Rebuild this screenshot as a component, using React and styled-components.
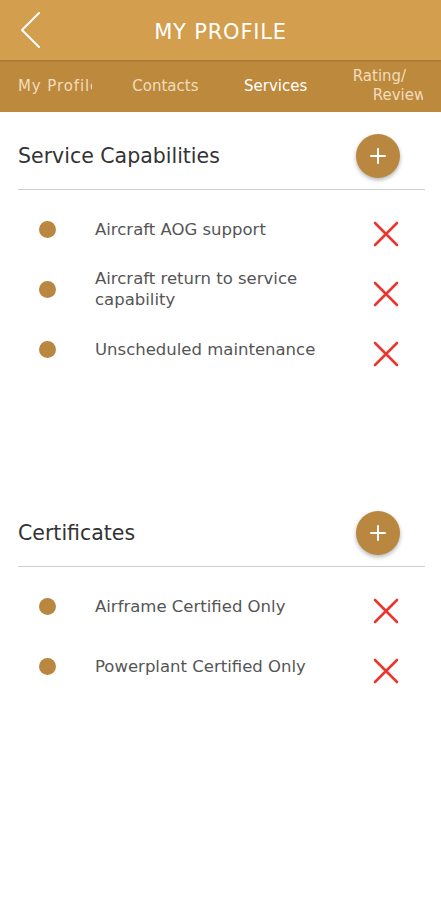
import React from "react";
import styled, { createGlobalStyle } from "styled-components";

const Global = createGlobalStyle`
  html, body { margin: 0; padding: 0; background: #ffffff; }
  body { font-family: "DejaVu Sans", "Open Sans", sans-serif; }
  * { box-sizing: border-box; }
`;

const Page = styled.div`
  width: 441px;
  min-height: 900px;
  background: #ffffff;
  display: flex;
  flex-direction: column;
`;

const Header = styled.header`
  height: 60px;
  background: #d39e4d;
  display: grid;
  grid-template-columns: 60px 1fr 60px;
  align-items: center;
  position: relative;
  z-index: 1;
  box-shadow: 0 1px 2px rgba(0, 0, 0, 0.18);
`;

const BackButton = styled.button`
  border: none;
  background: transparent;
  padding: 0 0 0 20px;
  height: 60px;
  display: flex;
  align-items: center;
`;

const Title = styled.h1`
  margin: 0;
  padding-top: 3px;
  text-align: center;
  color: #ffffff;
  font-size: 21px;
  font-weight: normal;
  letter-spacing: 0.8px;
`;

const TabBar = styled.nav`
  height: 52px;
  background: #bd893d;
  display: grid;
  grid-template-columns: repeat(4, 1fr);
`;

const Tab = styled.div`
  padding: 0 18px;
  display: flex;
  flex-direction: column;
  justify-content: center;
  min-width: 0;
`;

const TabLabel = styled.div`
  overflow: hidden;
  text-align: center;
  white-space: nowrap;
  font-size: 15px;
  line-height: 19px;
  color: ${(p) => (p.$active ? "#ffffff" : "#f1dcbc")};
  letter-spacing: ${(p) => p.$spacing || 0}px;
`;

const TabLine = styled.span`
  display: block;
  text-align: left;
  padding-left: ${(p) => p.$indent}px;
`;

const Body = styled.main`
  padding: 22px 16px 0 18px;
  display: flex;
  flex-direction: column;
`;

const Section = styled.section`
  display: flex;
  flex-direction: column;
  margin-bottom: ${(p) => p.$gap || 0}px;
`;

const SectionHead = styled.div`
  display: flex;
  align-items: center;
  justify-content: space-between;
  height: 44px;
  padding-right: 25px;
`;

const SectionTitle = styled.h2`
  margin: 0;
  font-size: 20.5px;
  font-weight: normal;
  color: #333333;
`;

const AddButton = styled.button`
  width: 44px;
  height: 44px;
  border-radius: 50%;
  border: none;
  background: #b9873f;
  box-shadow: 0 2px 4px rgba(0, 0, 0, 0.3);
  display: flex;
  align-items: center;
  justify-content: center;
  padding: 0;
`;

const Divider = styled.hr`
  border: none;
  height: 1px;
  background: #cfcfcf;
  margin: 11px 0 9px;
`;

const Row = styled.div`
  height: 60px;
  display: grid;
  grid-template-columns: 77px 1fr 52px;
  align-items: center;
`;

const Dot = styled.span`
  width: 17px;
  height: 17px;
  border-radius: 50%;
  background: #b9873f;
  margin-left: 21px;
`;

const RowText = styled.span`
  font-size: 16.5px;
  line-height: 21px;
  color: #555555;
  padding-right: 10px;
`;

const Remove = styled.button`
  border: none;
  background: transparent;
  padding: 0;
  margin-top: 9px;
  width: 26px;
  height: 26px;
  display: flex;
  align-items: center;
  justify-content: center;
`;

const Chevron = () => (
  <svg width="22" height="36" viewBox="0 0 22 36">
    <path d="M19 1 L2 18 L19 35" fill="none" stroke="#ffffff" strokeWidth="2" strokeLinecap="round" strokeLinejoin="round" />
  </svg>
);

const Plus = () => (
  <svg width="16" height="16" viewBox="0 0 16 16">
    <path d="M8 1 V15 M1 8 H15" stroke="#ffffff" strokeWidth="2" strokeLinecap="round" />
  </svg>
);

const Cross = () => (
  <svg width="26" height="26" viewBox="0 0 26 26">
    <path d="M2 2 L24 24 M24 2 L2 24" stroke="#e8372f" strokeWidth="2.6" strokeLinecap="round" />
  </svg>
);

const Item = ({ children }) => (
  <Row>
    <Dot />
    <RowText>{children}</RowText>
    <Remove aria-label="Remove">
      <Cross />
    </Remove>
  </Row>
);

const services = [
  "Aircraft AOG support",
  "Aircraft return to service capability",
  "Unscheduled maintenance",
];

const certificates = ["Airframe Certified Only", "Powerplant Certified Only"];

export default function App() {
  return (
    <>
      <Global />
      <Page>
        <Header>
          <BackButton aria-label="Back">
            <Chevron />
          </BackButton>
          <Title>MY PROFILE</Title>
          <span />
        </Header>
        <TabBar>
          <Tab>
            <TabLabel $spacing={0.9}>My Profile</TabLabel>
          </Tab>
          <Tab>
            <TabLabel>Contacts</TabLabel>
          </Tab>
          <Tab>
            <TabLabel $active>Services</TabLabel>
          </Tab>
          <Tab>
            <TabLabel>
              <TabLine $indent={4}>Rating/</TabLine>
              <TabLine $indent={24}>Review</TabLine>
            </TabLabel>
          </Tab>
        </TabBar>
        <Body>
          <Section $gap={132}>
            <SectionHead>
              <SectionTitle>Service Capabilities</SectionTitle>
              <AddButton aria-label="Add">
                <Plus />
              </AddButton>
            </SectionHead>
            <Divider />
            {services.map((s) => (
              <Item key={s}>{s}</Item>
            ))}
          </Section>
          <Section>
            <SectionHead>
              <SectionTitle>Certificates</SectionTitle>
              <AddButton aria-label="Add">
                <Plus />
              </AddButton>
            </SectionHead>
            <Divider />
            {certificates.map((s) => (
              <Item key={s}>{s}</Item>
            ))}
          </Section>
        </Body>
      </Page>
    </>
  );
}
